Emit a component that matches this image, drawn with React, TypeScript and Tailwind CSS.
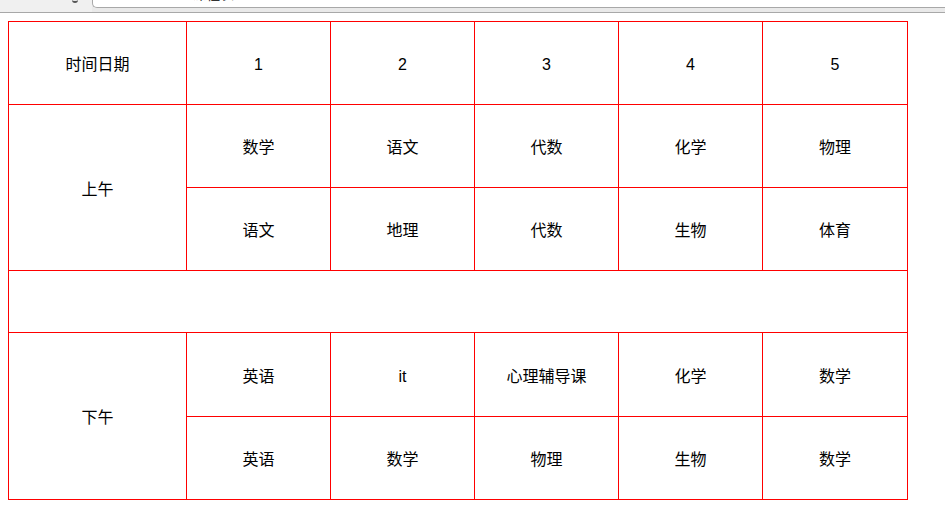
const rows = [
  ["数学", "语文", "代数", "化学", "物理"],
  ["语文", "地理", "代数", "生物", "体育"],
  ["英语", "it", "心理辅导课", "化学", "数学"],
  ["英语", "数学", "物理", "生物", "数学"],
];

const cell = "border border-[#ff0000] text-center align-middle p-0 pt-[4px]";

export default function App() {
  return (
    <div className="min-h-screen bg-white text-black" style={{ fontFamily: '"Liberation Sans", "Noto Sans CJK SC", sans-serif' }}>
      {/* browser chrome, cut off at top */}
      <div className="flex h-[13px] bg-[#e9e9e9] border-b border-[#a8a8a8]">
        <div className="w-[92px] h-[12px] bg-[#f0f0f0] flex justify-end pr-[14px]">
          <div className="w-[6px] h-[3px] border-b-2 border-[#555] rounded-b-full" />
        </div>
        <div className="flex-1 h-[8px] bg-white border-b border-l border-[#a8a8a8] rounded-bl-[5px] overflow-hidden">
          <div className="-mt-[14px] pl-[18px] text-[14px] leading-[16px] text-[#333] whitespace-nowrap">
            file:///D:/web/课程表/index.html
          </div>
        </div>
      </div>

      <div className="p-2">
        <table className="border-collapse table-fixed w-[900px] text-[16px]">
          <colgroup>
            <col className="w-[178px]" />
            <col className="w-[144px]" />
            <col className="w-[144px]" />
            <col className="w-[144px]" />
            <col className="w-[144px]" />
            <col />
          </colgroup>
          <tbody>
            <tr className="h-[83px]">
              <td className={cell}>时间日期</td>
              {[1, 2, 3, 4, 5].map((n) => (
                <td key={n} className={cell}>{n}</td>
              ))}
            </tr>
            <tr className="h-[83px]">
              <td rowSpan={2} className={cell}>上午</td>
              {rows[0].map((s, i) => (
                <td key={i} className={cell}>{s}</td>
              ))}
            </tr>
            <tr className="h-[83px]">
              {rows[1].map((s, i) => (
                <td key={i} className={cell}>{s}</td>
              ))}
            </tr>
            <tr className="h-[62px]">
              <td colSpan={6} className={cell}></td>
            </tr>
            <tr className="h-[84px]">
              <td rowSpan={2} className={cell}>下午</td>
              {rows[2].map((s, i) => (
                <td key={i} className={cell}>{s}</td>
              ))}
            </tr>
            <tr className="h-[83px]">
              {rows[3].map((s, i) => (
                <td key={i} className={cell}>{s}</td>
              ))}
            </tr>
          </tbody>
        </table>
      </div>
    </div>
  );
}
